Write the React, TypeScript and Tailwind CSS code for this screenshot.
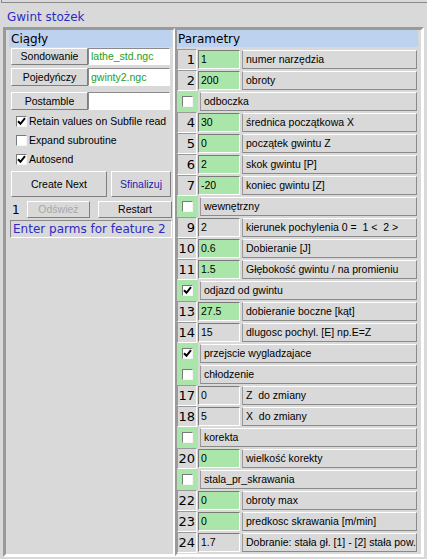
import React from "react";

type Row =
  | { kind: "e"; n: number; v: string; g: boolean; l: string }
  | { kind: "c"; c: boolean; l: string };

const rows: Row[] = [
  { kind: "e", n: 1, v: "1", g: true, l: "numer narzędzia" },
  { kind: "e", n: 2, v: "200", g: true, l: "obroty" },
  { kind: "c", c: false, l: "odboczka" },
  { kind: "e", n: 4, v: "30", g: true, l: "średnica początkowa X" },
  { kind: "e", n: 5, v: "0", g: true, l: "początek gwintu Z" },
  { kind: "e", n: 6, v: "2", g: true, l: "skok gwintu [P]" },
  { kind: "e", n: 7, v: "-20", g: true, l: "koniec gwintu [Z]" },
  { kind: "c", c: false, l: "wewnętrzny" },
  { kind: "e", n: 9, v: "2", g: false, l: "kierunek pochylenia 0 =  1 <  2 >" },
  { kind: "e", n: 10, v: "0.6", g: true, l: "Dobieranie [J]" },
  { kind: "e", n: 11, v: "1.5", g: true, l: "Głębokość gwintu / na promieniu" },
  { kind: "c", c: true, l: "odjazd od gwintu" },
  { kind: "e", n: 13, v: "27.5", g: true, l: "dobieranie boczne [kąt]" },
  { kind: "e", n: 14, v: "15", g: false, l: "dlugosc pochyl. [E] np.E=Z" },
  { kind: "c", c: true, l: "przejscie wygladzajace" },
  { kind: "c", c: false, l: "chłodzenie" },
  { kind: "e", n: 17, v: "0", g: false, l: "Z  do zmiany" },
  { kind: "e", n: 18, v: "5", g: false, l: "X  do zmiany" },
  { kind: "c", c: false, l: "korekta" },
  { kind: "e", n: 20, v: "0", g: true, l: "wielkość korekty" },
  { kind: "c", c: false, l: "stala_pr_skrawania" },
  { kind: "e", n: 22, v: "0", g: true, l: "obroty max" },
  { kind: "e", n: 23, v: "0", g: true, l: "predkosc skrawania [m/min]" },
  { kind: "e", n: 24, v: "1.7", g: false, l: "Dobranie: stała gł. [1] - [2] stała pow." },
];

function Tick() {
  return (
    <svg width="9" height="9" viewBox="0 0 9 9">
      <path d="M1 4.2 L3.5 6.8 L8 1.2" stroke="#000" strokeWidth="2" fill="none" />
    </svg>
  );
}

function Check({ c }: { c: boolean }) {
  return (
    <div className="w-[11px] h-[11px] bg-white border border-t-[#7a7a7a] border-l-[#7a7a7a] border-b-[#f4f4f4] border-r-[#f4f4f4] flex items-center justify-center">
      {c && <Tick />}
    </div>
  );
}

function Btn({ children, className }: { children: React.ReactNode; className: string }) {
  return (
    <div
      className={
        "flex items-center justify-center bg-[#d9d9d9] border border-t-white border-l-white border-b-[#7f7f7f] border-r-[#7f7f7f] " +
        className
      }
    >
      {children}
    </div>
  );
}

export default function App() {
  return (
    <div className="w-[427px] h-[559px] bg-[#d9d9d9] overflow-hidden font-['Liberation_Sans',Arial,sans-serif] text-[10.5px] text-black leading-none">
      <div className="h-[3px] ml-[1px] border-l border-b border-[#8a8a8a]" />
      <div className="h-[24px] pl-[7px] pt-[8px] font-['DejaVu_Sans',sans-serif] text-[12px] text-[#2c2cc4]">
        Gwint stożek
      </div>
      <div className="ml-[3px] w-[421px] h-[530px] border border-t-[#9a9a9a] border-l-[#9a9a9a] border-b-white border-r-white flex">
        {/* left panel */}
        <div className="w-[171px] h-full border-2 border-t-[#9a9a9a] border-l-[#9a9a9a] border-b-white border-r-white pl-[3px] pr-[1px]">
          <div className="h-[17px] bg-[#bcd2ee] flex items-center pl-[2px] font-['DejaVu_Sans',sans-serif] text-[12px]">
            Ciągły
          </div>
          <div className="mt-[1px] h-[17px] flex">
            <Btn className="ml-[2px] w-[77px] h-full">Sondowanie</Btn>
            <div className="w-[82px] h-full bg-white border border-t-[#8a8a8a] border-l-[#8a8a8a] border-b-white border-r-white flex items-center pl-[2px] text-[#22a022]">
              lathe_std.ngc
            </div>
          </div>
          <div className="mt-[3px] h-[18px] flex">
            <Btn className="ml-[2px] w-[77px] h-full">Pojedyńczy</Btn>
            <div className="w-[82px] h-full bg-white border border-t-[#8a8a8a] border-l-[#8a8a8a] border-b-white border-r-white flex items-center pl-[2px] text-[#22a022]">
              gwinty2.ngc
            </div>
          </div>
          <div className="mt-[6px] h-[18px] flex">
            <Btn className="ml-[2px] w-[77px] h-full">Postamble</Btn>
            <div className="w-[82px] h-full bg-white border border-t-[#8a8a8a] border-l-[#8a8a8a] border-b-white border-r-white" />
          </div>
          <div className="mt-[2px] h-[19px] flex items-center pl-[7px] gap-[2px]">
            <Check c={true} />
            <span>Retain values on Subfile read</span>
          </div>
          <div className="h-[19px] flex items-center pl-[7px] gap-[2px]">
            <Check c={false} />
            <span>Expand subroutine</span>
          </div>
          <div className="h-[19px] flex items-center pl-[7px] gap-[2px]">
            <Check c={true} />
            <span>Autosend</span>
          </div>
          <div className="mt-[2px] h-[26px] flex gap-[4px]">
            <Btn className="ml-[2px] w-[96px] h-full">Create Next</Btn>
            <Btn className="w-[60px] h-full text-[#2020b0]">Sfinalizuj</Btn>
          </div>
          <div className="mt-[4px] h-[17px] flex items-center">
            <span className="w-[18px] pl-[3px] font-['DejaVu_Sans',sans-serif] text-[12px]">1</span>
            <Btn className="w-[63px] h-full text-[#a8a8a8]">Odśwież</Btn>
            <Btn className="ml-[8px] w-[74px] h-full">Restart</Btn>
          </div>
          <div className="mt-[2px] ml-[1px] h-[18px] border border-t-[#8a8a8a] border-l-[#8a8a8a] border-b-white border-r-white flex items-center pl-[2px] font-['DejaVu_Sans',sans-serif] text-[12px] text-[#2c2cc4]">
            Enter parms for feature 2
          </div>
        </div>
        {/* right panel */}
        <div className="w-[248px] h-full border-2 border-t-[#9a9a9a] border-l-[#9a9a9a] border-b-white border-r-white pr-[3px]">
          <div className="h-[17px] bg-[#bcd2ee] flex items-center pl-[1px] font-['DejaVu_Sans',sans-serif] text-[12px]">
            Parametry
          </div>
          <div className="mt-[2px] flex flex-col">
            {rows.map((r, i) =>
              r.kind === "e" ? (
                <div key={i} className="h-[21px] flex items-center">
                  <div className="w-[20px] h-[21px] border border-t-[#9a9a9a] border-l-[#9a9a9a] border-b-white border-r-white flex items-center justify-end pr-[1px] font-['DejaVu_Sans',sans-serif] text-[13px]">
                    {r.n}
                  </div>
                  <div
                    className={
                      (r.g ? "bg-[#aae6aa] " : "bg-[#d9d9d9] ") +
                      "ml-[1px] w-[42px] h-[19px] border border-t-[#7a7a7a] border-l-[#7a7a7a] border-b-white border-r-white flex items-center pl-[2px]"
                    }
                  >
                    {r.v}
                  </div>
                  <div className="ml-[2px] w-[175px] h-[19px] border border-t-white border-l-[#9a9a9a] border-b-[#8a8a8a] border-r-[#8a8a8a] flex items-center pl-[3px] whitespace-pre">
                    {r.l}
                  </div>
                </div>
              ) : (
                <div key={i} className="h-[21px] flex items-center">
                  <div className="w-[21px] h-[21px] bg-[#aae6aa] flex items-center justify-center">
                    <Check c={r.c} />
                  </div>
                  <div className="ml-[2px] w-[217px] h-[19px] border border-t-white border-l-[#9a9a9a] border-b-[#8a8a8a] border-r-[#8a8a8a] flex items-center pl-[3px] whitespace-pre">
                    {r.l}
                  </div>
                </div>
              )
            )}
          </div>
        </div>
      </div>
    </div>
  );
}
